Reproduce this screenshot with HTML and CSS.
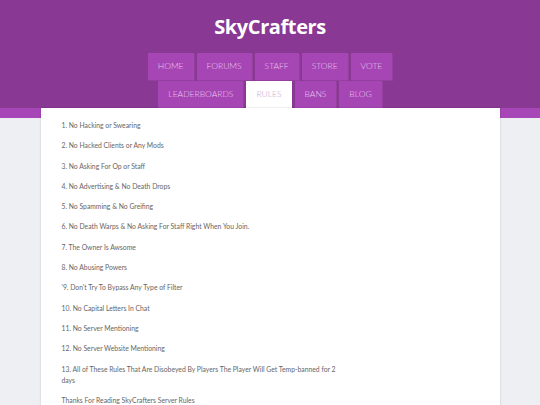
FILE: index.html
```html
<!DOCTYPE html>
<html>
<head>
<meta charset="utf-8">
<link rel="stylesheet" href="styles.css">
</head>
<body>
<header class="site-header">
  <h1 class="logo">SkyCrafters</h1>
  <nav class="nav">
    <a class="nav-item" href="#">Home</a>
    <a class="nav-item" href="#">Forums</a>
    <a class="nav-item" href="#">Staff</a>
    <a class="nav-item" href="#">Store</a>
    <a class="nav-item" href="#">Vote</a>
    <a class="nav-item" href="#">Leaderboards</a>
    <a class="nav-item active" href="#">Rules</a>
    <a class="nav-item" href="#">Bans</a>
    <a class="nav-item" href="#">Blog</a>
  </nav>
</header>
<div class="band"></div>
<main class="card">
  <p>1. No Hacking or Swearing</p>
  <p>2. No Hacked Clients or Any Mods</p>
  <p>3. No Asking For Op or Staff</p>
  <p>4. No Advertising &amp; No Death Drops</p>
  <p>5. No Spamming &amp; No Greifing</p>
  <p>6. No Death Warps &amp; No Asking For Staff Right When You Join.</p>
  <p>7. The Owner Is Awsome</p>
  <p>8. No Abusing Powers</p>
  <p>'9. Don't Try To Bypass Any Type of Filter</p>
  <p>10. No Capital Letters In Chat</p>
  <p>11. No Server Mentioning</p>
  <p>12. No Server Website Mentioning</p>
  <p class="wrap">13. All of These Rules That Are Disobeyed By Players The Player Will Get Temp-banned for 2 days</p>
  <p>Thanks For Reading SkyCrafters Server Rules</p>
</main>
</body>
</html>
```
FILE: styles.css
```css
html, body {
  margin: 0;
  padding: 0;
}
body {
  background: #eeeff3;
  font-family: Lato, "Open Sans", sans-serif;
  overflow: hidden;
}
.site-header {
  background: #893894;
  padding-top: 12px;
  display: flex;
  flex-direction: column;
  align-items: center;
}
.logo {
  margin: 0;
  font-family: "Open Sans", sans-serif;
  font-weight: 700;
  font-size: 20px;
  line-height: 30px;
  color: #ffffff;
  letter-spacing: -0.4px;
}
.nav {
  margin-top: 11px;
  width: 252px;
  display: flex;
  flex-wrap: wrap;
  justify-content: center;
  gap: 1px 3px;
}
.nav-item {
  display: block;
  height: 27px;
  line-height: 27px;
  padding: 0 10px;
  background: #a646b5;
  box-shadow: 1px 1px 0 #95409f;
  color: #e9c8ee;
  text-decoration: none;
  text-transform: uppercase;
  font-size: 8.5px;
  font-weight: 300;
}
.nav-item.active {
  background: #ffffff;
  color: #c79bd0;
  box-shadow: none;
}
.band {
  height: 10px;
  background: #a746b6;
}
.card {
  background: #ffffff;
  width: 418px;
  margin: -10px auto 0;
  padding: 12px 20px 0 21px;
  box-shadow: 0 0 2px rgba(0,0,0,0.18);
  min-height: 300px;
  position: relative;
}
.card p {
  margin: 0 0 9.3px;
  font-size: 6.8px;
  line-height: 11px;
  color: #666666;
}
.card p.wrap {
  max-width: 278px;
}
```
